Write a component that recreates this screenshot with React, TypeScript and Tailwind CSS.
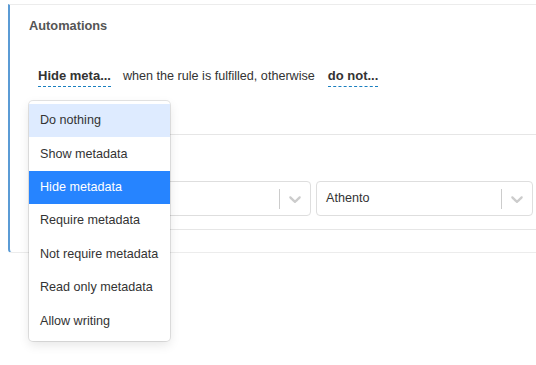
import React from "react";

const Chevron = () => (
  <svg width="20" height="20" viewBox="0 0 20 20" className="fill-[#cccccc]">
    <path d="M4.516 7.548c0.436-0.446 1.043-0.481 1.576 0l3.908 3.747 3.908-3.747c0.533-0.481 1.141-0.446 1.574 0 0.436 0.445 0.408 1.197 0 1.615-0.406 0.418-4.695 4.502-4.695 4.502-0.217 0.223-0.502 0.335-0.787 0.335s-0.57-0.112-0.789-0.335c0 0-4.287-4.084-4.695-4.502s-0.436-1.17 0-1.615z" />
  </svg>
);

const Select = ({ value }: { value?: string }) => (
  <div className="w-[217px] h-[35px] border border-[#dedede] rounded-[4px] bg-white flex items-center">
    <div className="flex-1 pl-[9px] text-[12.6px] text-[#333]">{value}</div>
    <div className="w-px h-[20px] bg-[#cccccc]" />
    <div className="w-[30px] flex items-center justify-center">
      <Chevron />
    </div>
  </div>
);

const options = [
  "Do nothing",
  "Show metadata",
  "Hide metadata",
  "Require metadata",
  "Not require metadata",
  "Read only metadata",
  "Allow writing",
];

export default function App() {
  return (
    <div className="w-[536px] h-[365px] bg-white relative overflow-hidden font-['Liberation_Sans',Arial,sans-serif] text-[#333]">
      <div className="pt-[4px] pl-[8px]">
        <div className="h-[249px] border-t border-b border-[#ececec] border-l-2 border-l-[#5b9bd5] rounded-bl-[4px]">
          <div className="pl-[19px] pt-[12px] text-[12.8px] leading-[18px] font-bold text-[#555]">
            Automations
          </div>
          <div className="pl-[28px] pt-[32px] flex items-start text-[12.6px] leading-[18px]">
            <span className="font-bold text-[13px] border-b border-dashed border-[#1a7fc0] pb-[1px]">Hide meta...</span>
            <span className="ml-[12px]">when the rule is fulfilled, otherwise</span>
            <span className="ml-[13px] font-bold text-[13px] border-b border-dashed border-[#1a7fc0] pb-[1px]">do not...</span>
          </div>
          <div className="ml-[19px] mt-[47px] border-t border-[#e6e6e6] h-[96px] flex flex-col">
            <div className="mt-[46px] pl-[65px] flex gap-[5px]">
              <Select />
              <Select value="Athento" />
            </div>
            <div className="mt-auto border-b border-[#e6e6e6]" />
          </div>
        </div>
      </div>

      <div className="absolute left-[29px] top-[101px] w-[141px] bg-white rounded-[4px] py-[3px] shadow-[0_0_0_1px_rgba(0,0,0,0.1),0_4px_11px_rgba(0,0,0,0.1)]">
        {options.map((o, i) => (
          <div
            key={o}
            className={
              "h-[33.4px] px-[11px] flex items-center whitespace-nowrap text-[12.6px] " +
              (i === 0
                ? "bg-[#deebff] text-[#333]"
                : i === 2
                ? "bg-[#2684ff] text-white"
                : "text-[#333]")
            }
          >
            {o}
          </div>
        ))}
      </div>
    </div>
  );
}
